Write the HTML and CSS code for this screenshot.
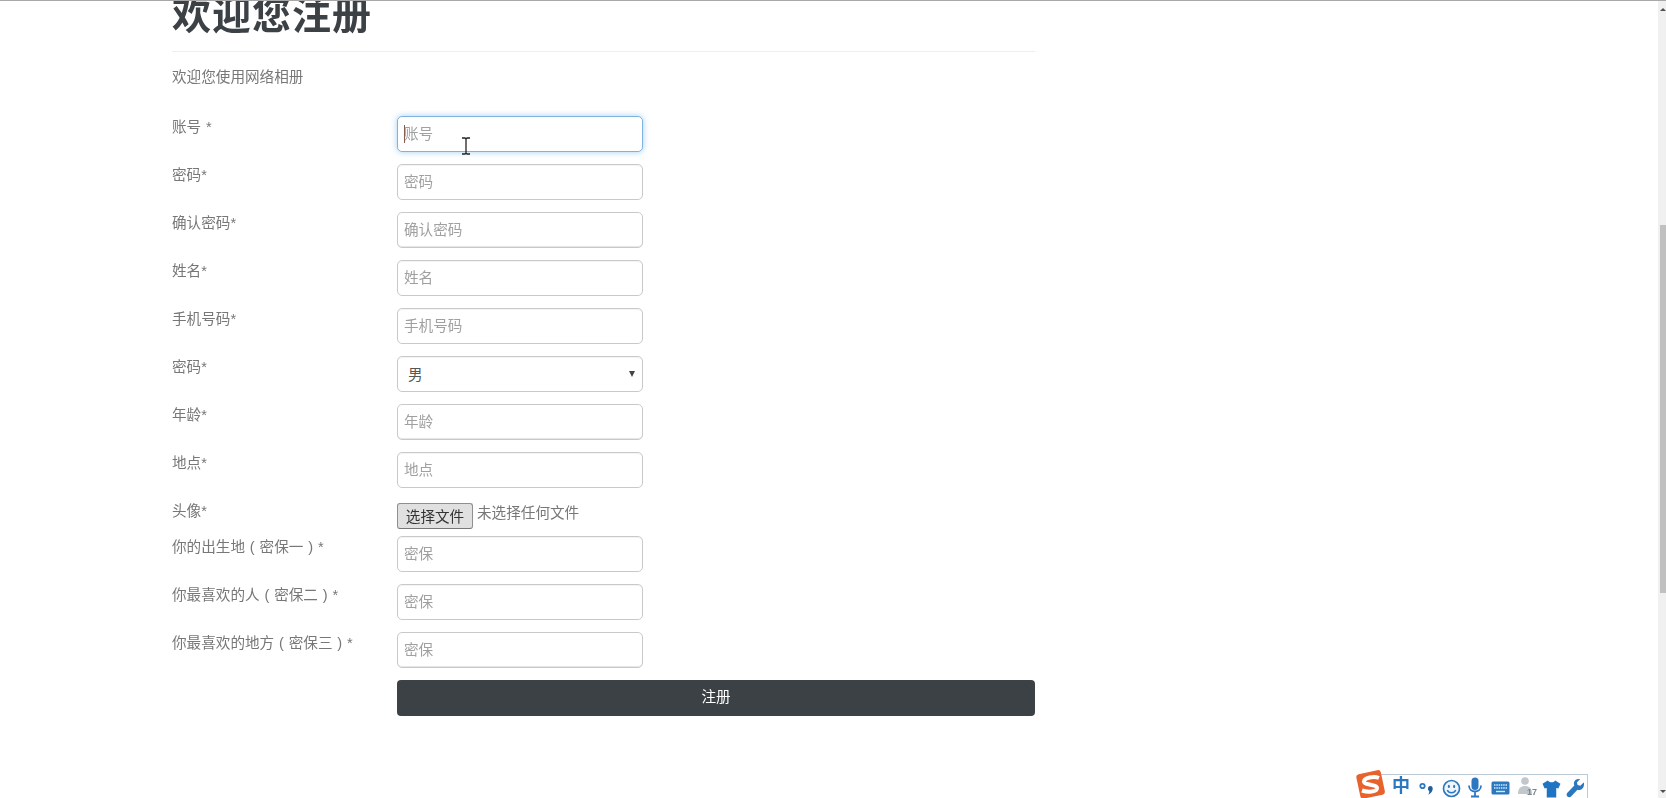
FILE: index.html
```html
<!DOCTYPE html>
<html lang="zh">
<head>
<meta charset="utf-8">
<title>欢迎您注册</title>
<link rel="stylesheet" href="styles.css">
</head>
<body>
<div class="window">
  <main class="page">
    <div class="content">
      <h1 class="title">欢迎您注册</h1>
      <p class="lead">欢迎您使用网络相册</p>
      <form class="form">
        <label class="lbl">账号 *</label>
        <div class="field"><input class="ctl focus" placeholder="账号"><span class="caret"></span></div>
        <label class="lbl">密码*</label>
        <div class="field"><input class="ctl" placeholder="密码"></div>
        <label class="lbl">确认密码*</label>
        <div class="field"><input class="ctl worn" placeholder="确认密码"></div>
        <label class="lbl">姓名*</label>
        <div class="field"><input class="ctl" placeholder="姓名"></div>
        <label class="lbl">手机号码*</label>
        <div class="field"><input class="ctl" placeholder="手机号码"></div>
        <label class="lbl">密码*</label>
        <div class="field"><div class="ctl sel"><span class="sel-val">男</span><span class="sel-arrow"></span></div></div>
        <label class="lbl">年龄*</label>
        <div class="field"><input class="ctl worn" placeholder="年龄"></div>
        <label class="lbl">地点*</label>
        <div class="field"><input class="ctl" placeholder="地点"></div>
        <label class="lbl">头像*</label>
        <div class="field file"><span class="file-btn">选择文件</span><span class="file-txt">未选择任何文件</span></div>
        <label class="lbl">你的出生地 ( 密保一 ) *</label>
        <div class="field"><input class="ctl" placeholder="密保"></div>
        <label class="lbl">你最喜欢的人 ( 密保二 ) *</label>
        <div class="field"><input class="ctl" placeholder="密保"></div>
        <label class="lbl">你最喜欢的地方 ( 密保三 ) *</label>
        <div class="field"><input class="ctl worn" placeholder="密保"></div>
        <div class="submit-row"><span class="submit">注册</span></div>
      </form>
    </div>
  </main>
  <aside class="scrollbar">
    <span class="sb-up"></span>
    <span class="sb-thumb"></span>
    <span class="sb-down"></span>
  </aside>
</div>

<svg class="cursor" width="12" height="18" viewBox="0 0 12 18"><path d="M2 1h3l1 1 1-1h3M6 2v14M2 17h3l1-1 1 1h3" fill="none" stroke="#222" stroke-width="1.3"/></svg>

<div class="ime">
  <svg class="ime-logo" width="30" height="28" viewBox="0 0 30 28"><rect x="2" y="2" width="25" height="25" rx="3" fill="#e8622c" transform="rotate(-12 14 14)"/><path d="M23 8C18 6 8 7.500 8 11.500S21 14 21 18 12 22.500 6 20.500" fill="none" stroke="#fff" stroke-width="4"/></svg>
  <span class="ime-zh">中</span>
  <svg class="ime-punct" width="18" height="18" viewBox="0 0 18 18"><circle cx="4.500" cy="6" r="2.200" fill="none" stroke="#2b78c0" stroke-width="1.800"/><path d="M12 6c2.500 0 3.200 1.700 2.500 4-.6 2-2 3.500-4.300 4.700 1-1.700 1.300-2.800 1-3.700-2-1-1.300-5 .8-5z" fill="#1f5f9e"/></svg>
  <svg width="19" height="19" viewBox="0 0 18 18"><circle cx="9" cy="9" r="7.600" fill="#eef5fb" stroke="#2b78c0" stroke-width="1.600"/><ellipse cx="6.500" cy="7" rx="1" ry="1.500" fill="#2b78c0"/><ellipse cx="11.500" cy="7" rx="1" ry="1.500" fill="#2b78c0"/><path d="M5 10.500c1.500 3.500 6.500 3.500 8 0" fill="none" stroke="#2b78c0" stroke-width="1.400"/></svg>
  <svg width="16" height="21" viewBox="0 0 16 20"><rect x="4.500" y="0" width="7" height="12.500" rx="3.500" fill="#2b78c0"/><path d="M2 8c0 8 12 8 12 0M8 14.500v3.500M4 19h8" fill="none" stroke="#2b78c0" stroke-width="1.800"/></svg>
  <svg class="ime-kb" width="19" height="14" viewBox="0 0 19 14"><rect x=".5" y=".5" width="18" height="13" rx="1.500" fill="#2b78c0"/><path d="M3 4h13M3 7h13" stroke="#d8e8f6" stroke-width="1.400" stroke-dasharray="1.500 .8"/><path d="M5 10.500h9" stroke="#d8e8f6" stroke-width="1.400"/></svg>
  <svg class="ime-person" width="22" height="22" viewBox="0 0 22 22"><circle cx="8" cy="5" r="3.800" fill="#c2c7cb"/><path d="M1 18c0-6 3-8 7-8s7 2 7 8z" fill="#c2c7cb"/><text class="ime-num" x="10" y="19">17</text></svg>
  <svg class="ime-shirt" width="19" height="18" viewBox="0 0 18 17"><path d="M5.500 .5L.5 3.500 2.500 8l2-.5V16.500h9V7.500l2 .5 2-4.500-5-3c-1 2.200-5.500 2.200-7 0z" fill="#1f75c4"/></svg>
  <svg class="ime-wrench" width="19" height="19" viewBox="0 0 18 18"><path d="M16.500 3.500l-3 3-2.500-.7-.7-2.500 3-3c-2.500-.8-5.500.7-5.800 3.500-.1 1 .1 1.800.4 2.400L1.300 13c-1 1-1 2.500 0 3.500s2.500 1 3.500 0l6-6.300c.7.300 1.500.4 2.400.3 2.800-.4 4.300-3.500 3.800-7z" fill="#2b78c0"/></svg>
</div>
</body>
</html>
```
FILE: styles.css
```css
* { box-sizing: border-box; }
html, body { margin: 0; height: 100%; overflow: hidden; background: #fff; }
body { font-family: "Liberation Sans", "Noto Sans CJK SC", sans-serif; color: #777; }

.window { display: flex; height: 798px; border-top: 1px solid #a8a8a8; overflow: hidden; filter: blur(.5px); }
.page { flex: 1; min-width: 0; padding-left: 172px; }
.content { width: 863px; margin-top: -9px; }

.title { margin: 0; font-size: 39px; line-height: 47px; font-weight: 700; color: #3c4146; padding-bottom: 12px; border-bottom: 1px solid #eeeeee; letter-spacing: 1px; white-space: nowrap; }
.lead { margin: 15px 0 0; font-size: 14.600px; line-height: 20px; color: #777; }

.form { display: grid; grid-template-columns: 225px 246px; row-gap: 12px; margin-top: 28.500px; }
.lbl { font-size: 14.600px; line-height: 20px; padding-top: 1px; color: #777; white-space: nowrap; word-spacing: .8px; }
.field { display: flex; position: relative; }
.ctl { width: 246px; height: 36px; border: 1px solid #c9c9c9; border-radius: 5px; background: #fff; padding: 0 6px; font: 14.600px "Liberation Sans", "Noto Sans CJK SC", sans-serif; color: #555; outline: none; box-shadow: inset 0 1px 1px rgba(0,0,0,.05); }
.ctl::placeholder { color: #a0a0a0; opacity: 1; }
.focus { border-color: #7fb2dc; box-shadow: 0 0 6px rgba(102,175,233,.6); }
.worn { box-shadow: inset 0 -1px 0 #e6e6e6; }
.caret { position: absolute; left: 7px; top: 9px; width: 1px; height: 18px; background: #8a5a50; }

.sel { display: flex; align-items: center; justify-content: space-between; padding: 0 6px 0 10px; color: #555; }
.sel-arrow { width: 0; height: 0; border-left: 3.500px solid transparent; border-right: 3.500px solid transparent; border-top: 6px solid #444; margin-right: 1px; }

.file { align-items: flex-start; gap: 4px; height: 24px; padding-top: 3px; }
.file-btn { flex: none; width: 76px; height: 26px; background: #e0e0e0; border: 1px solid #8f8f8f; border-bottom-color: #777; border-radius: 3px; font-size: 14.600px; line-height: 26px; color: #333; text-align: center; }
.file-txt { font-size: 14.600px; line-height: 20px; color: #777; }

.submit-row { grid-column: 2; }
.submit { display: block; width: 638px; height: 36px; background: #3c4146; border-radius: 4px; color: #fff; font-size: 14.600px; line-height: 34px; text-align: center; }

.scrollbar { flex: 0 0 8px; background: #f0f0f0; display: flex; flex-direction: column; align-items: flex-end; }
.sb-up, .sb-down { width: 6px; height: 0; border-left: 3px solid transparent; border-right: 3px solid transparent; }
.sb-up { margin-top: 7px; border-bottom: 3px solid #505050; }
.sb-thumb { width: 6px; height: 368px; margin-top: 214px; background: #c0c0c0; }
.sb-down { margin-top: auto; margin-bottom: 5px; border-top: 3px solid #505050; }

.cursor { position: absolute; left: 460px; top: 137px; filter: blur(.3px); }

.ime { position: absolute; z-index: 1; left: 1356px; top: 770px; width: 232px; height: 28px; display: flex; align-items: flex-end; gap: 6px; padding-right: 3px; filter: blur(.5px); }
.ime::before { content: ""; position: absolute; left: 10px; right: 0; top: 4px; bottom: 0; background: #fff; border: 1px solid #bccad6; border-bottom: 0; z-index: -1; }
.ime-logo { position: relative; }
.ime-zh { font-size: 18px; font-weight: 700; color: #2b78c0; line-height: 24px; }
.ime-punct { margin-left: 2px; }
.ime-kb { margin-bottom: 3px; margin-left: 2px; }
.ime-person { margin-left: 1px; }
.ime-shirt { margin-left: -3px; }
.ime-wrench { margin-left: -1px; }
.ime-num { font: 700 9px "Liberation Sans", sans-serif; fill: #7c848a; }
```
